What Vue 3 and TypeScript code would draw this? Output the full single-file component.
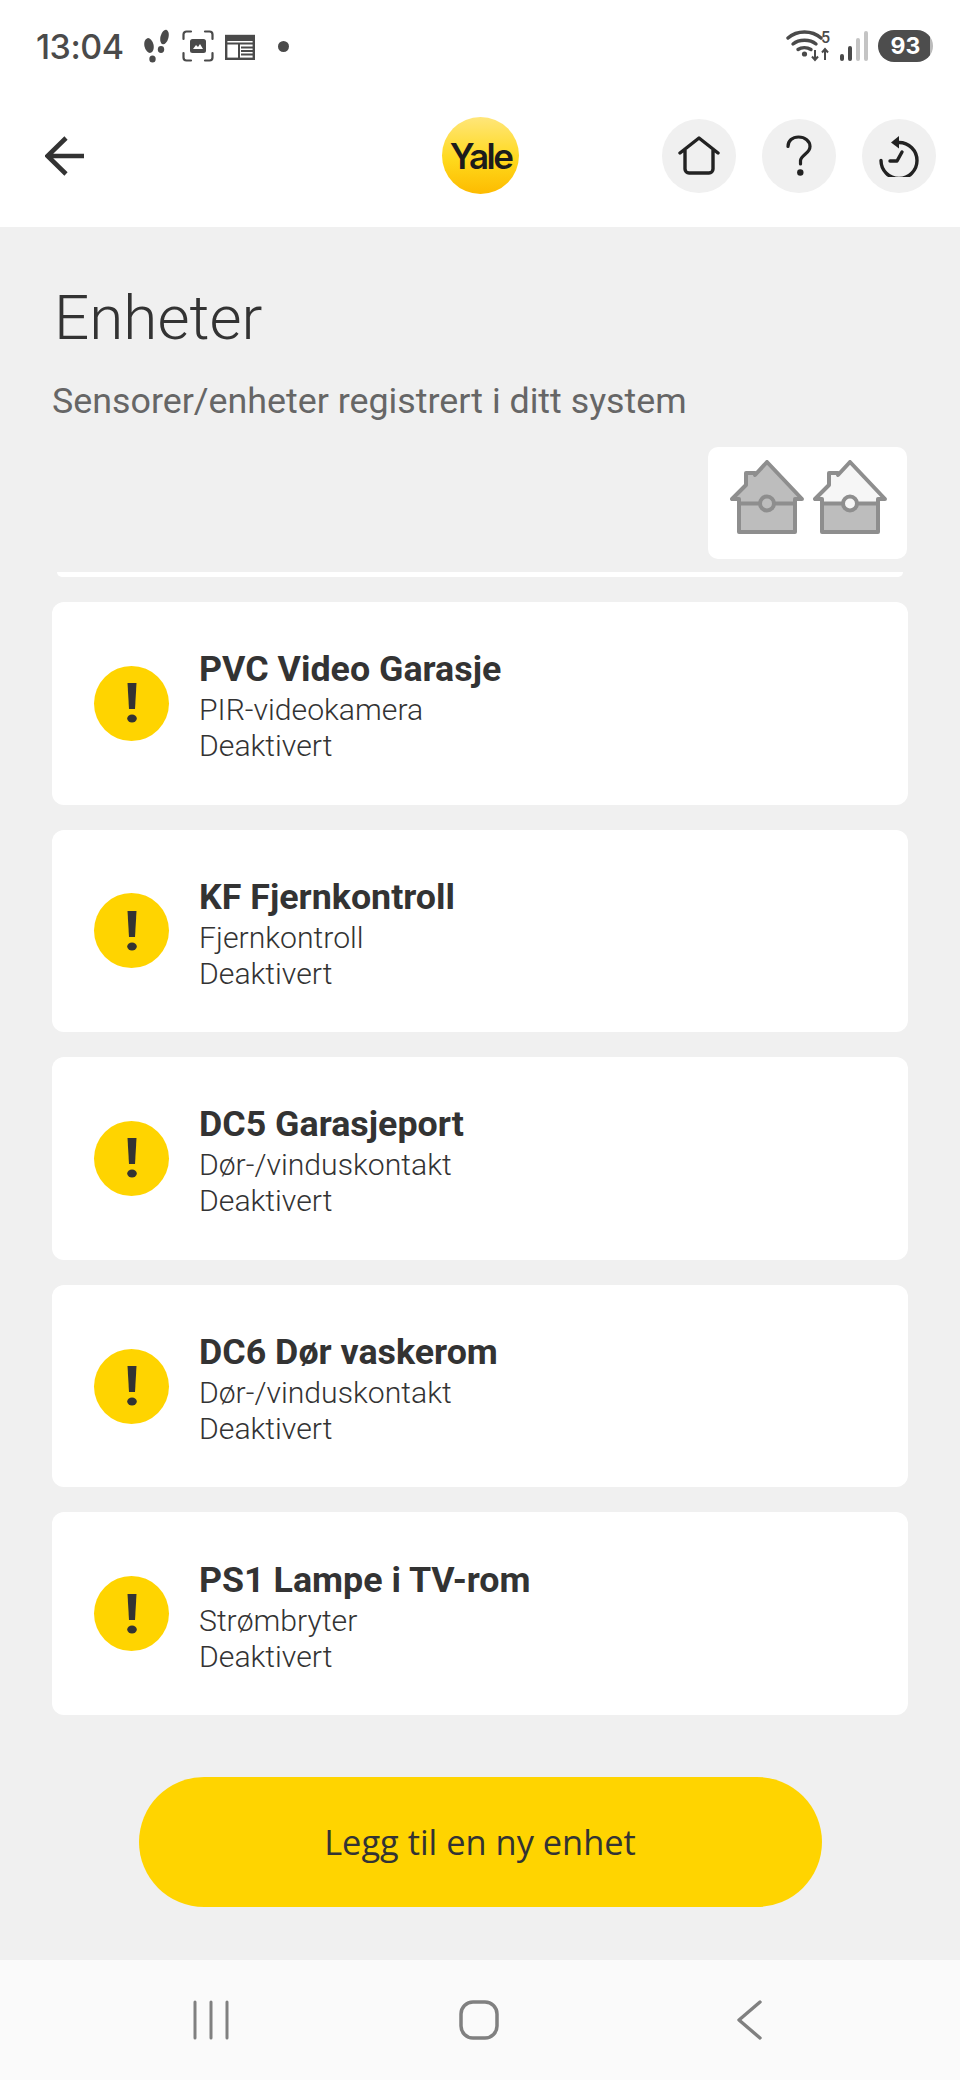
<template>
  <div class="page">
    <div class="status-bar">
      <div class="status-left">
        <span class="time">13:04</span>
        <svg class="st-steps" viewBox="0 0 28 34" width="28" height="34">
          <g fill="#4a4a4a">
            <ellipse cx="6" cy="16.500" rx="4.600" ry="7.500" transform="rotate(-12 6 16.500)" />
            <ellipse cx="9.500" cy="30" rx="3.200" ry="3.600" />
            <ellipse cx="21.500" cy="8" rx="4" ry="7.500" transform="rotate(14 21.500 8)" />
            <ellipse cx="18" cy="20.500" rx="3.200" ry="3.400" />
          </g>
        </svg>
        <svg class="st-shot" viewBox="0 0 32 32" width="32" height="32">
          <g fill="none" stroke="#4a4a4a" stroke-width="2.200" stroke-linecap="round">
            <path d="M1.500 9V4.500a3 3 0 0 1 3-3H9M23 1.500h4.500a3 3 0 0 1 3 3V9M30.500 23v4.500a3 3 0 0 1-3 3H23M9 30.500H4.500a3 3 0 0 1-3-3V23" />
          </g>
          <rect x="8" y="9" width="16" height="14" rx="2.500" fill="#4a4a4a" />
          <path d="M11 19l3-4 2 2 2-3 3 5z" fill="#fff" />
        </svg>
        <svg class="st-news" viewBox="0 0 30 27" width="30" height="27">
          <path d="M1 2l3.500 2 3.500-2 3.500 2 3.500-2 3.500 2 3.500-2 3.500 2 3-2v6H1z" fill="#4a4a4a" />
          <rect x="1.200" y="3" width="27.600" height="22.800" fill="none" stroke="#4a4a4a" stroke-width="2.400" />
          <path d="M1 10.500h28M14 10.500v15M16 14.500h12M16 18h12M16 21.500h12" stroke="#4a4a4a" stroke-width="2" fill="none" />
        </svg>
        <span class="st-dot"></span>
      </div>
      <div class="status-right">
        <svg viewBox="0 0 46 32" width="46" height="32">
          <g fill="none" stroke="#4a4a4a" stroke-width="3.400" stroke-linecap="round">
            <path d="M2 8c9-8 24-8 33 0" />
            <path d="M7 14c6-5 17-5 23 0" />
            <path d="M12 19.500c3.500-2.500 9-2.500 13 0" />
          </g>
          <circle cx="18.500" cy="24" r="2.600" fill="#4a4a4a" />
          <path d="M29 20v10M26 26.500l3 3.500 3-3.500M39 30V19M36 22.500l3-3.500 3 3.500" fill="none" stroke="#4a4a4a" stroke-width="2" />
        </svg>
        <span class="wifi-num">5</span>
        <div class="signal">
          <i v-for="(b, n) in signalBars" :key="n" :class="{ off: b.off }" :style="{ height: b.h + 'px' }"></i>
        </div>
        <div class="battery"><span>93</span></div>
      </div>
    </div>

    <header class="top-bar">
      <svg class="back" viewBox="0 0 40 40" width="40" height="40">
        <path d="M39 20H3M21 2L2.500 20 21 38" fill="none" stroke="#333" stroke-width="4.600" />
      </svg>
      <div class="logo"><span>Yale</span></div>
      <div class="top-actions">
        <div class="round-btn">
          <svg viewBox="0 0 42 40" width="42" height="40">
            <path d="M2 17L21 2l19 15M7 13v20a4 4 0 0 0 4 4h20a4 4 0 0 0 4-4V13" fill="none" stroke="#222" stroke-width="3.400" stroke-linecap="round" stroke-linejoin="round" />
          </svg>
        </div>
        <div class="round-btn">
          <svg viewBox="0 0 26 42" width="26" height="42">
            <path d="M2 11.500C2 5.500 6.500 2 12.500 2 19 2 24 6 24 11.500c0 7-8.500 8-9.500 14v3.500" fill="none" stroke="#222" stroke-width="3.200" stroke-linecap="round" />
            <circle cx="14.300" cy="37.500" r="3.200" fill="#222" />
          </svg>
        </div>
        <div class="round-btn">
          <svg viewBox="0 0 42 42" width="42" height="42">
            <path d="M21 7.500a18 18 0 1 1-18 18" fill="none" stroke="#222" stroke-width="3.400" stroke-linecap="round" />
            <path d="M21 1l-8 6.500 8 6z" fill="#222" />
            <path d="M24 17l-5 9h-7" fill="none" stroke="#222" stroke-width="3.400" stroke-linecap="round" stroke-linejoin="round" />
          </svg>
        </div>
      </div>
    </header>

    <main class="content">
      <h1>Enheter</h1>
      <p class="subtitle">Sensorer/enheter registrert i ditt system</p>

      <div class="house-row">
        <div class="house-box">
          <svg v-for="h in houses" :key="h" viewBox="0 0 74 74" width="74" height="74">
            <path d="M9 39v33h56V39" fill="#bdbdbd" />
            <path d="M2 39L16 25V13h9v3L37 2l35 37h-7v4H9v-4z" :fill="h === 'home' ? '#bdbdbd' : '#f6f6f6'" />
            <path d="M2 39h7v33h56V39h7L37 2 25 15v-2h-9v12z" fill="none" stroke="#8e8e8e" stroke-width="4" stroke-linejoin="round" />
            <path d="M9 43.500h56" stroke="#8e8e8e" stroke-width="4" />
            <circle cx="37" cy="43.500" r="7" :fill="h === 'home' ? '#bdbdbd' : '#f6f6f6'" stroke="#8e8e8e" stroke-width="4" />
          </svg>
        </div>
      </div>

      <div class="card-sliver"></div>

      <div class="device-list">
        <div v-for="d in devices" :key="d.name" class="device-card">
          <div class="warn">
            <svg viewBox="0 0 14 40" width="14" height="40">
              <path d="M2.500 0h9L10 26H4z" fill="#333" />
              <ellipse cx="7" cy="35.500" rx="4.800" ry="4" fill="#333" />
            </svg>
          </div>
          <div class="device-text">
            <div class="device-name">{{ d.name }}</div>
            <div class="device-line">{{ d.type }}</div>
            <div class="device-line">Deaktivert</div>
          </div>
        </div>
      </div>

      <button class="add-btn">Legg til en ny enhet</button>
    </main>

    <footer class="nav-bar">
      <svg viewBox="0 0 38 40" width="38" height="40">
        <path d="M3 2v36M19 2v36M35 2v36" stroke="#808080" stroke-width="3" stroke-linecap="round" fill="none" />
      </svg>
      <svg class="nav-home" viewBox="0 0 40 40" width="40" height="40">
        <rect x="2" y="2" width="36" height="36" rx="12" fill="none" stroke="#808080" stroke-width="3.500" />
      </svg>
      <svg viewBox="0 0 26 40" width="26" height="40">
        <path d="M24 2L3 20l21 18" fill="none" stroke="#808080" stroke-width="3.400" stroke-linecap="round" stroke-linejoin="round" />
      </svg>
    </footer>
  </div>
</template>

<script setup lang="ts">
interface Device {
  name: string
  type: string
}

const signalBars = [
  { h: 7, off: false },
  { h: 15, off: false },
  { h: 23, off: true },
  { h: 30, off: true },
]

const houses = ['home', 'away']

const devices: Device[] = [
  { name: 'PVC Video Garasje', type: 'PIR-videokamera' },
  { name: 'KF Fjernkontroll', type: 'Fjernkontroll' },
  { name: 'DC5 Garasjeport', type: 'Dør-/vinduskontakt' },
  { name: 'DC6 Dør vaskerom', type: 'Dør-/vinduskontakt' },
  { name: 'PS1 Lampe i TV-rom', type: 'Strømbryter' },
]
</script>

<style>
html,
body {
  margin: 0;
  background: #fff;
}
</style>

<style scoped>
.page {
  width: 960px;
  height: 2080px;
  display: flex;
  flex-direction: column;
  font-family: Roboto, 'Liberation Sans', sans-serif;
  color: #333;
  overflow: hidden;
}

.status-bar {
  height: 92px;
  box-sizing: border-box;
  padding: 0 27px 0 36px;
  display: flex;
  align-items: center;
  justify-content: space-between;
  background: #fff;
}

.status-left {
  display: flex;
  align-items: center;
}

.time {
  font-family: Inter, Roboto, sans-serif;
  font-size: 34px;
  font-weight: 500;
  color: #4a4a4a;
  margin-right: 19px;
  letter-spacing: -0.5px;
}

.st-shot {
  margin-left: 11px;
}

.st-news {
  margin-left: 11px;
}

.st-dot {
  width: 11px;
  height: 11px;
  border-radius: 50%;
  background: #4a4a4a;
  margin-left: 23px;
}

.status-right {
  display: flex;
  align-items: center;
  position: relative;
}

.wifi-num {
  position: absolute;
  left: 35px;
  top: -2px;
  font-size: 16px;
  font-weight: 500;
  color: #4a4a4a;
}

.signal {
  display: flex;
  align-items: flex-end;
  gap: 4px;
  height: 30px;
  margin-left: 8px;
}

.signal i {
  width: 4px;
  border-radius: 2px;
  background: #4a4a4a;
}

.signal i.off {
  background: #c4c4c4;
}

.battery {
  width: 55px;
  height: 32px;
  margin-left: 10px;
  border-radius: 16px;
  background: linear-gradient(90deg, #4d4d4d 94%, #bbb 94%);
  display: flex;
  align-items: center;
  justify-content: center;
  color: #fff;
  font-family: Inter, Roboto, sans-serif;
  font-size: 23px;
  font-weight: 700;
}

.top-bar {
  height: 135px;
  box-sizing: border-box;
  padding: 0 24px 8px 45px;
  display: flex;
  align-items: center;
  justify-content: space-between;
  background: #fff;
  position: relative;
}

.logo {
  position: absolute;
  left: 442px;
  top: 25px;
  width: 77px;
  height: 77px;
  border-radius: 50%;
  background: linear-gradient(180deg, #ffe67a 0%, #ffd91c 55%, #fdbb00 100%);
  display: flex;
  align-items: center;
  justify-content: center;
}

.logo span {
  font-family: Inter, Roboto, sans-serif;
  font-size: 35px;
  font-weight: 600;
  letter-spacing: -2.500px;
  color: #1c1c1c;
}

.top-actions {
  display: flex;
  gap: 26px;
}

.round-btn {
  width: 74px;
  height: 74px;
  border-radius: 50%;
  background: #f0f0f0;
  display: flex;
  align-items: center;
  justify-content: center;
}

.content {
  flex: 1;
  box-sizing: border-box;
  padding: 0 52px;
  background: #f0f0f0;
  display: flex;
  flex-direction: column;
}

h1 {
  margin: 56px 0 0 2px;
  font-size: 62px;
  line-height: 70px;
  font-weight: 300;
  color: #333;
}

.subtitle {
  margin: 28px 0 0;
  font-size: 35.800px;
  line-height: 40px;
  font-weight: 400;
  color: #666;
}

.house-row {
  display: flex;
  justify-content: flex-end;
  margin-top: 26px;
}

.house-box {
  width: 199px;
  height: 112px;
  margin-right: 1px;
  box-sizing: border-box;
  padding: 13px 20px 0 22px;
  display: flex;
  justify-content: space-between;
  align-items: flex-start;
  background: #fff;
  border-radius: 10px;
}

.card-sliver {
  height: 5px;
  margin: 13px 5px 0 5px;
  background: #fff;
  border-radius: 0 0 6px 6px;
}

.device-list {
  display: flex;
  flex-direction: column;
  gap: 25px;
  margin-top: 25px;
}

.device-card {
  height: 202.600px;
  box-sizing: border-box;
  padding: 0 0 0 42px;
  display: flex;
  align-items: center;
  gap: 30px;
  background: #fff;
  border-radius: 12px;
}

.warn {
  width: 75px;
  height: 75px;
  border-radius: 50%;
  background: #ffd400;
  display: flex;
  align-items: center;
  justify-content: center;
}

.device-text {
  padding-top: 5px;
}

.device-name {
  font-size: 35.800px;
  line-height: 44px;
  font-weight: 700;
  color: #333;
  margin-bottom: 1px;
}

.device-line {
  font-size: 30.200px;
  line-height: 36px;
  font-weight: 300;
  color: #333;
}

.add-btn {
  align-self: center;
  width: 683px;
  height: 130px;
  margin-top: 62px;
  border: none;
  border-radius: 65px;
  background: #ffd400;
  color: #333;
  font-family: 'Open Sans', Roboto, sans-serif;
  font-size: 34.400px;
  font-weight: 400;
}

.nav-bar {
  height: 120px;
  box-sizing: border-box;
  padding: 0 198px 0 192px;
  display: flex;
  align-items: center;
  justify-content: space-between;
  background: #fafafa;
}

.nav-home {
  margin-right: 8px;
}
</style>
